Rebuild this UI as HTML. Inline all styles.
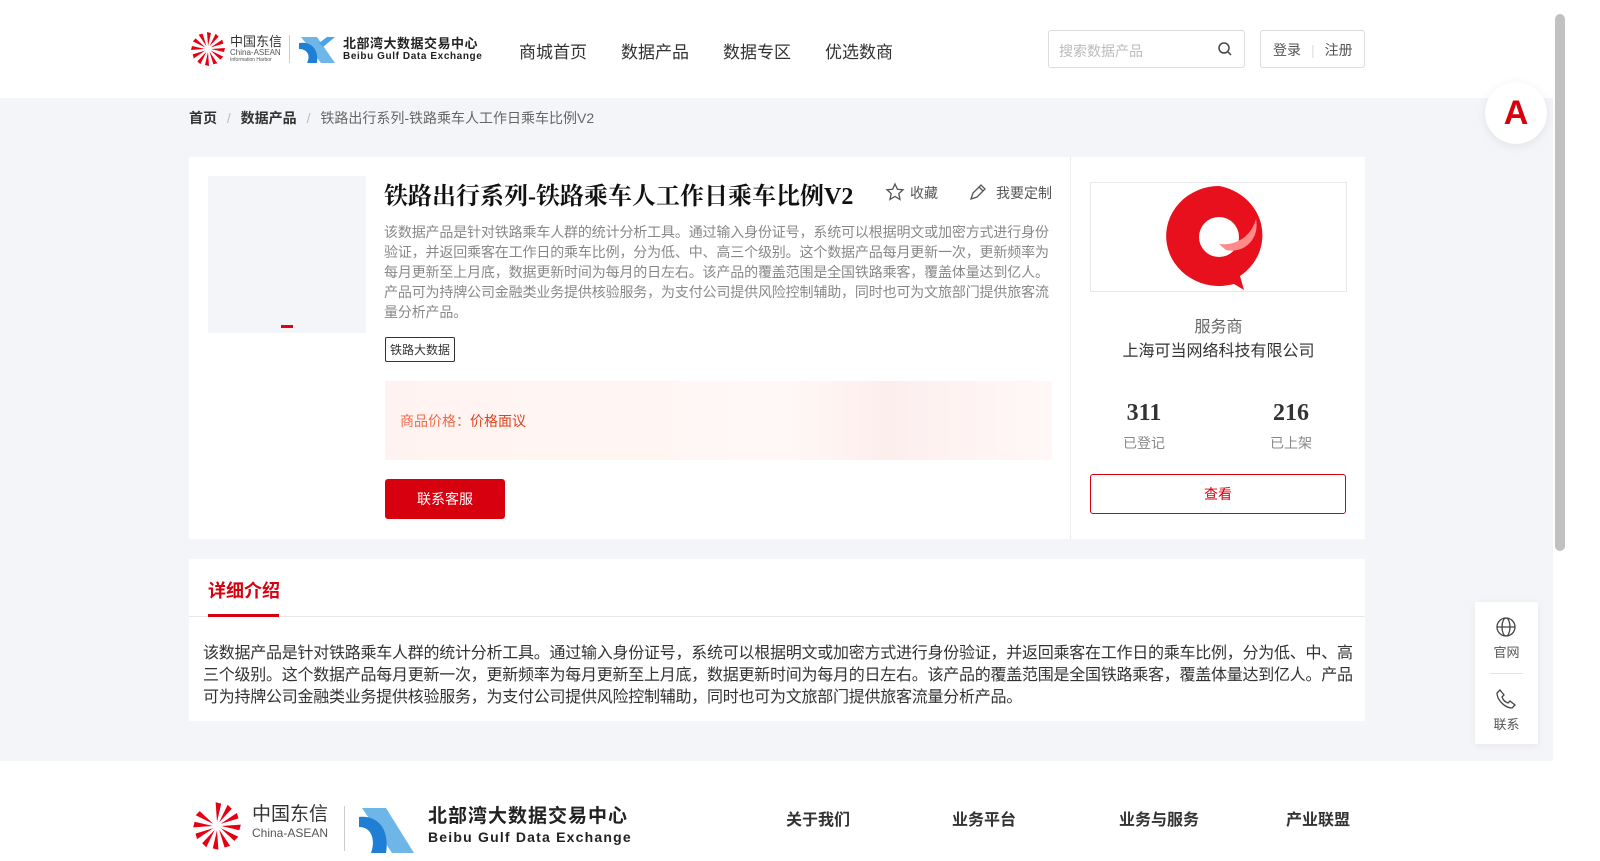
<!DOCTYPE html>
<html><head><meta charset="utf-8"><style>
*{margin:0;padding:0;box-sizing:border-box}
body{width:1600px;height:861px;overflow:hidden;background:#fff;font-family:"Liberation Sans","Noto Sans CJK SC",sans-serif;color:#333;position:relative}
.abs{position:absolute;white-space:nowrap}
.wrap{white-space:normal}
.main{position:absolute;left:0;top:98px;width:1553px;height:663px;background:#f4f5f8}
.nav a{position:absolute;top:38px;font-size:17px;color:#333}
.card{background:#fff;position:absolute}
</style></head><body>
<svg class="abs" style="left:188px;top:29px" width="40" height="40" viewBox="0 0 40 40"><g fill="#e60012" transform="translate(20,20)">
<g id="p"><path d="M0 -3 L3 -16 L-1 -17 Z"/></g>
<use href="#p" transform="rotate(30)"/><use href="#p" transform="rotate(60)"/><use href="#p" transform="rotate(90)"/><use href="#p" transform="rotate(120)"/><use href="#p" transform="rotate(150)"/><use href="#p" transform="rotate(180)"/><use href="#p" transform="rotate(210)"/><use href="#p" transform="rotate(240)"/><use href="#p" transform="rotate(270)"/><use href="#p" transform="rotate(300)"/><use href="#p" transform="rotate(330)"/></g></svg>
<div class="abs" style="left:230px;top:35px;font-size:13px;color:#333;line-height:13px">中国东信</div>
<div class="abs" style="left:230px;top:49px;font-size:8px;color:#555;line-height:8px">China-ASEAN</div>
<div class="abs" style="left:230px;top:57px;font-size:5px;color:#555">Information Harbor</div>
<div class="abs" style="left:289px;top:35px;width:1px;height:28px;background:#ccc"></div>
<svg class="abs" style="left:297px;top:35px" width="40" height="30"><path d="M4 2 H20 L38 28 H24 Z" fill="#6fb6e8"/><path d="M2 8 C14 6 22 14 20 28 H10 C14 20 10 14 2 14Z" fill="#1f7fd4"/><path d="M26 12 L38 2 H30 L22 8Z" fill="#4aa3e6"/></svg>
<div class="abs" style="left:343px;top:37px;font-size:13px;font-weight:bold;color:#222;letter-spacing:0.5px;line-height:14px">北部湾大数据交易中心</div>
<div class="abs" style="left:343px;top:51px;font-size:10px;font-weight:bold;color:#222;letter-spacing:0.6px">Beibu Gulf Data Exchange</div>
<div class="nav"><a style="left:519px">商城首页</a><a style="left:621px">数据产品</a><a style="left:723px">数据专区</a><a style="left:825px">优选数商</a></div>
<div class="abs" style="left:1048px;top:30px;width:197px;height:38px;border:1px solid #ddd;border-radius:3px;font-size:14px;color:#bbb;padding:10px 10px">搜索数据产品</div>
<svg class="abs" style="left:1217px;top:41px" width="16" height="16" viewBox="0 0 16 16"><circle cx="7" cy="7" r="5" fill="none" stroke="#444" stroke-width="1.5"/><path d="M11 11 L14 14" stroke="#444" stroke-width="1.5"/></svg>
<div class="abs" style="left:1260px;top:30px;width:105px;height:38px;border:1px solid #ddd;border-radius:3px;font-size:14px;color:#555;padding:9px 12px">登录<span style="color:#ddd;margin:0 10px">|</span>注册</div>

<div class="main"></div>
<div class="abs" style="left:189px;top:108px;font-size:14px;color:#333"><b>首页</b> <span style="color:#bbb;margin:0 6px">/</span> <b>数据产品</b> <span style="color:#bbb;margin:0 6px">/</span> <span style="color:#666">铁路出行系列-铁路乘车人工作日乘车比例V2</span></div>

<div class="card" style="left:189px;top:157px;width:1176px;height:382px"></div>
<div class="abs" style="left:1070px;top:157px;width:1px;height:382px;background:#eee"></div>
<div class="abs" style="left:208px;top:176px;width:158px;height:157px;background:#f4f5f8"></div>
<div class="abs" style="left:281px;top:325px;width:12px;height:3px;background:#e60012"></div>
<div class="abs" style="left:384px;top:176px;font-size:24px;font-weight:bold;color:#111;font-family:'Liberation Serif','Noto Serif CJK SC',serif">铁路出行系列-铁路乘车人工作日乘车比例V2</div>
<svg class="abs" style="left:885px;top:182px" width="20" height="20" viewBox="0 0 20 20"><path d="M10 2 L12.4 7.3 18 7.8 13.8 11.6 15 17.4 10 14.5 5 17.4 6.2 11.6 2 7.8 7.6 7.3Z" fill="none" stroke="#555" stroke-width="1.3"/></svg>
<div class="abs" style="left:910px;top:183px;font-size:14px;color:#555">收藏</div>
<svg class="abs" style="left:968px;top:182px" width="20" height="20" viewBox="0 0 20 20"><path d="M3 17 L5 11 L13 3 L17 7 L9 15Z M11 5 L15 9" fill="none" stroke="#555" stroke-width="1.3"/></svg>
<div class="abs" style="left:996px;top:183px;font-size:14px;color:#555">我要定制</div>
<div class="abs wrap" style="left:384px;top:222px;width:675px;font-size:14px;line-height:20px;color:#888;letter-spacing:-0.15px">该数据产品是针对铁路乘车人群的统计分析工具。通过输入身份证号，系统可以根据明文或加密方式进行身份验证，并返回乘客在工作日的乘车比例，分为低、中、高三个级别。这个数据产品每月更新一次，更新频率为每月更新至上月底，数据更新时间为每月的日左右。该产品的覆盖范围是全国铁路乘客，覆盖体量达到亿人。产品可为持牌公司金融类业务提供核验服务，为支付公司提供风险控制辅助，同时也可为文旅部门提供旅客流量分析产品。</div>
<div class="abs" style="left:385px;top:337px;border:1px solid #333;border-radius:2px;font-size:12px;padding:3px 4px;color:#333">铁路大数据</div>
<div class="abs" style="left:385px;top:381px;width:667px;height:79px;background:linear-gradient(90deg,#fff3f1,#fff8f6 60%,#fdeeee 75%,#fff8f7)"></div>
<div class="abs" style="left:400px;top:411px;font-size:14px;color:#f06a4a">商品价格：<span style="color:#e0401c">价格面议</span></div>
<div class="abs" style="left:385px;top:479px;width:120px;height:40px;background:#d7000f;border-radius:3px;color:#fff;font-size:14px;text-align:center;line-height:40px">联系客服</div>

<div class="abs" style="left:1090px;top:182px;width:257px;height:110px;border:1px solid #e8e8e8"></div>
<svg class="abs" style="left:1164px;top:184px" width="110" height="108" viewBox="0 0 110 108"><path d="M55 2 A53 50 0 1 0 70 100 L80 106 L76 92 A53 50 0 0 0 55 2Z" fill="#e8101d"/><circle cx="55" cy="53" r="20" fill="#fff"/><path d="M55 60 C75 62 88 50 92 35 C96 55 80 70 62 66Z" fill="#ff8a8a"/></svg>
<div class="abs" style="left:1090px;top:313px;width:257px;text-align:center;font-size:16px;color:#666">服务商</div>
<div class="abs" style="left:1090px;top:337px;width:257px;text-align:center;font-size:16px;color:#333">上海可当网络科技有限公司</div>
<div class="abs" style="left:1104px;top:400px;width:80px;text-align:center;font-size:24px;font-weight:bold;font-family:'Liberation Serif',serif;color:#333">311</div>
<div class="abs" style="left:1104px;top:433px;width:80px;text-align:center;font-size:14px;color:#888">已登记</div>
<div class="abs" style="left:1251px;top:400px;width:80px;text-align:center;font-size:24px;font-weight:bold;font-family:'Liberation Serif',serif;color:#333">216</div>
<div class="abs" style="left:1251px;top:433px;width:80px;text-align:center;font-size:14px;color:#888">已上架</div>
<div class="abs" style="left:1090px;top:474px;width:256px;height:40px;border:1px solid #d7000f;border-radius:3px;text-align:center;line-height:38px;color:#d7000f;font-size:14px">查看</div>

<div class="card" style="left:189px;top:559px;width:1176px;height:162px"></div>
<div class="abs" style="left:189px;top:616px;width:1176px;height:1px;background:#e8e8e8"></div>
<div class="abs" style="left:208px;top:577px;font-size:18px;font-weight:bold;color:#d7000f">详细介绍</div>
<div class="abs" style="left:208px;top:614px;width:71px;height:3px;background:#d7000f"></div>
<div class="abs wrap" style="left:203px;top:643px;width:1155px;font-size:16px;line-height:22px;color:#333;letter-spacing:-0.25px">该数据产品是针对铁路乘车人群的统计分析工具。通过输入身份证号，系统可以根据明文或加密方式进行身份验证，并返回乘客在工作日的乘车比例，分为低、中、高三个级别。这个数据产品每月更新一次，更新频率为每月更新至上月底，数据更新时间为每月的日左右。该产品的覆盖范围是全国铁路乘客，覆盖体量达到亿人。产品可为持牌公司金融类业务提供核验服务，为支付公司提供风险控制辅助，同时也可为文旅部门提供旅客流量分析产品。</div>

<div class="abs" style="left:1485px;top:82px;width:62px;height:62px;border-radius:50%;background:#fff;box-shadow:0 2px 10px rgba(0,0,0,.08);color:#d7000f;font-size:34px;font-weight:bold;text-align:center;line-height:62px">A</div>
<div class="abs" style="left:1475px;top:602px;width:63px;height:142px;background:#fff;box-shadow:0 2px 8px rgba(0,0,0,.06)"></div>
<svg class="abs" style="left:1495px;top:616px" width="22" height="22" viewBox="0 0 22 22" fill="none" stroke="#444" stroke-width="1.3"><circle cx="11" cy="11" r="9"/><ellipse cx="11" cy="11" rx="4" ry="9"/><path d="M2 11H20"/></svg>
<div class="abs" style="left:1475px;top:642px;width:63px;text-align:center;font-size:13px;color:#555">官网</div>
<div class="abs" style="left:1490px;top:673px;width:33px;height:1px;background:#e5e5e5"></div>
<svg class="abs" style="left:1495px;top:688px" width="22" height="22" viewBox="0 0 22 22" fill="none" stroke="#444" stroke-width="1.3"><path d="M5 2 L9 7 L7 9 C8 12 10 14 13 15 L15 13 L20 17 L17 20 C10 20 2 12 2 5Z"/></svg>
<div class="abs" style="left:1475px;top:714px;width:63px;text-align:center;font-size:13px;color:#555">联系</div>

<svg class="abs" style="left:189px;top:798px" width="56" height="56" viewBox="0 0 40 40"><g fill="#e60012" transform="translate(20,20)">
<g id="q"><path d="M0 -3 L3 -16 L-1 -17 Z"/></g>
<use href="#q" transform="rotate(30)"/><use href="#q" transform="rotate(60)"/><use href="#q" transform="rotate(90)"/><use href="#q" transform="rotate(120)"/><use href="#q" transform="rotate(150)"/><use href="#q" transform="rotate(180)"/><use href="#q" transform="rotate(210)"/><use href="#q" transform="rotate(240)"/><use href="#q" transform="rotate(270)"/><use href="#q" transform="rotate(300)"/></g></svg>
<div class="abs" style="left:252px;top:805px;font-size:19px;color:#333;line-height:20px">中国东信</div>
<div class="abs" style="left:252px;top:826px;font-size:12px;color:#555">China-ASEAN</div>
<div class="abs" style="left:344px;top:806px;width:1px;height:45px;background:#ccc"></div>
<svg class="abs" style="left:356px;top:805px" width="60" height="50"><path d="M6 3 H30 L58 48 H36 Z" fill="#6fb6e8"/><path d="M3 12 C20 10 34 22 30 48 H15 C20 34 15 22 3 22Z" fill="#1f7fd4"/></svg>
<div class="abs" style="left:428px;top:806px;font-size:19px;font-weight:bold;color:#222;letter-spacing:1px;line-height:22px">北部湾大数据交易中心</div>
<div class="abs" style="left:428px;top:829px;font-size:14px;font-weight:bold;color:#222;letter-spacing:1.2px;line-height:16px">Beibu Gulf Data Exchange</div>
<div class="abs" style="left:786px;top:806px;font-size:16px;font-weight:bold;color:#333">关于我们</div>
<div class="abs" style="left:952px;top:806px;font-size:16px;font-weight:bold;color:#333">业务平台</div>
<div class="abs" style="left:1119px;top:806px;font-size:16px;font-weight:bold;color:#333">业务与服务</div>
<div class="abs" style="left:1286px;top:806px;font-size:16px;font-weight:bold;color:#333">产业联盟</div>
<div class="abs" style="left:1553px;top:0;width:15px;height:861px;background:#fff"></div>
<div class="abs" style="left:1555px;top:14px;width:10px;height:537px;background:#c1c1c1;border-radius:5px"></div>
</body></html>
